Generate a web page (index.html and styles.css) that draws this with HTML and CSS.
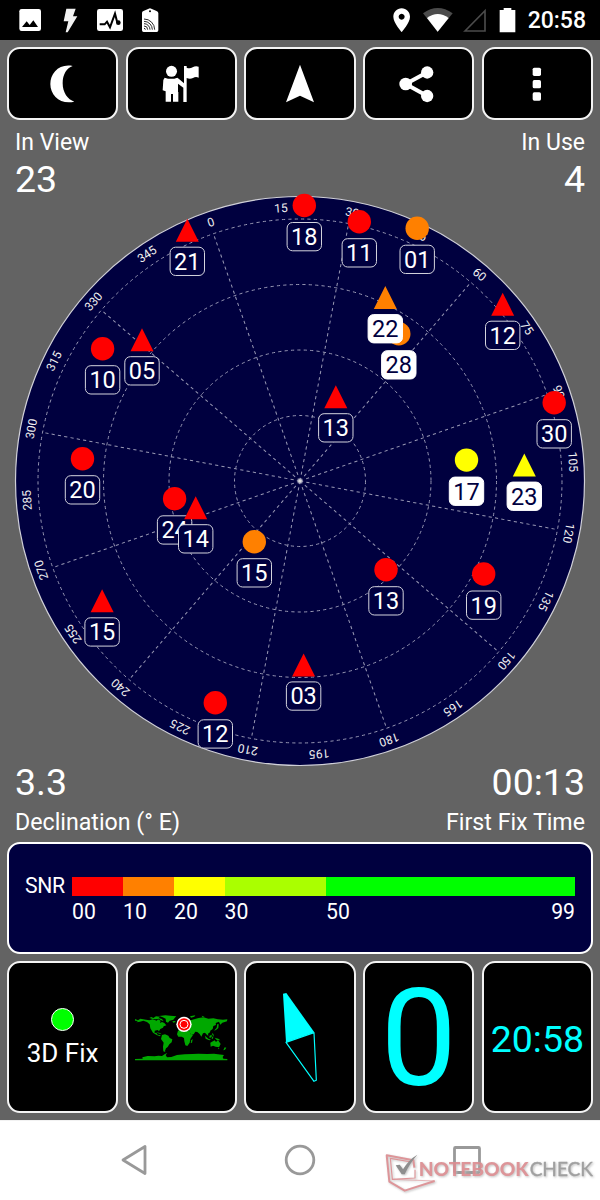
FILE: index.html
```html
<!DOCTYPE html>
<html lang="en">
<head>
  <meta charset="UTF-8" />
  <meta name="viewport" content="width=device-width, initial-scale=1" />
  <title>GPS Status</title>
  <link rel="stylesheet" href="styles.css">
</head>
<body>

  <div class="statusbar">
    <div class="status-left">
      <svg viewBox="30 0 120 120"><rect x="58" y="27" width="65" height="66" rx="7" fill="#fff"/><path d="M66 81 L80 64 L89 75 L100 61 L114 81Z" fill="#000"/></svg>
      <svg viewBox="150 0 120 120"><path d="M199 26 H227 L219 49 H232 L203 97 H197 L205 64 H191Z" fill="#f2f2f2"/></svg>
      <svg viewBox="270 0 120 120"><rect x="291" y="27" width="78" height="66" rx="7" fill="#fff"/><path d="M299 73 H314 L321 65 L330 82 L345 41 L352 68" fill="none" stroke="#000" stroke-width="6"/><circle cx="355" cy="68" r="7"/></svg>
      <svg viewBox="390 0 120 120"><path d="M426 38 Q426 34 432 32 L446 26 Q450 24 454 26 L468 32 Q475 34 475 39 V91 Q475 96 470 96 H431 Q426 96 426 91Z" fill="#fff"/><circle cx="450" cy="34" r="3"/><g fill="none" stroke="#000" stroke-width="2.500"><path d="M432 57 A32 32 0 0 1 464 89"/><path d="M432 64 A25 25 0 0 1 457 89"/><path d="M432 71 A18 18 0 0 1 450 89"/><path d="M432 78 A11 11 0 0 1 443 89"/><path d="M432 85 A4 4 0 0 1 436 89"/></g></svg>
    </div>
    <div class="status-right">
      <svg viewBox="251 0 108 120"><path fill-rule="evenodd" d="M304 25 C290 25 279 36 279 50 C279 68 304 96 304 96 C304 96 329 68 329 50 C329 36 318 25 304 25Z M304 41 A9 9 0 1 1 303.900 41Z" fill="#fff"/></svg>
      <svg viewBox="359 0 108 120"><path d="M368 40 Q412 8 457 40 L412 95Z" fill="#4b4b4b"/><path d="M380 54 Q412 30 445 54 L412 95Z" fill="#fff"/></svg>
      <svg viewBox="467 0 108 120"><path d="M494 93 L554 32 V93Z" fill="none" stroke="#4b4b4b" stroke-width="5"/></svg>
      <svg viewBox="575 0 108 120"><path d="M598 30 H610 V24 H633 V30 H645 V97 H598Z" fill="#fff"/></svg>
      <span class="clock">20:58</span>
    </div>
  </div>

  <div class="app">
    <div class="toolbar">
      <button class="tool"><svg viewBox="128 190 120 120"><path d="M217 196 C176 188 150 218 150 250 C150 285 181 313 222 303 C202 297 187 276 187 248 C187 221 199 202 217 196Z"/></svg></button>
      <button class="tool"><svg viewBox="484 190 120 120"><circle cx="515.500" cy="212" r="16.500"/><path d="M495 231 Q515 238 533 231 L539 236 L553 248 V196 H561 V201 Q570 205 579 200 Q587 195 597 198 V231 Q588 227 580 232 Q571 237 561 232 V304 H551 V261 L535 249 V274 H536 V303 H520 V280 H514 V303 H498 V272 L489 269 L491 238Z"/></svg></button>
      <button class="tool"><svg viewBox="840 190 120 120"><path d="M900 192 L942 305 L900 285 L858 305Z"/></svg></button>
      <button class="tool"><svg viewBox="296 190 120 120"><path d="M381 215 L316 250 L381 286" fill="none" stroke="#fff" stroke-width="12"/><circle cx="316" cy="250" r="19"/><circle cx="380.500" cy="215.500" r="18.500"/><circle cx="380.500" cy="286" r="18.500"/></svg></button>
      <button class="tool"><svg viewBox="652 190 120 120"><rect x="699" y="201" width="25" height="25" rx="5"/><rect x="699" y="238" width="25" height="25" rx="5"/><rect x="699" y="275" width="25" height="25" rx="5"/></svg></button>
    </div>

    <div class="stats stats-top">
      <div class="stat">
        <span class="stat-label">In View</span>
        <span class="stat-value">23</span>
      </div>
      <div class="stat right">
        <span class="stat-label">In Use</span>
        <span class="stat-value">4</span>
      </div>
    </div>

    <!-- Sky view -->
    <svg class="radar" viewBox="-285 -285 570 570">
      <defs>
        <circle id="dot" r="11.700"/>
        <path id="tri" d="M0 -11.500 L11.500 11.500 H-11.500Z"/>
        <rect id="tag" x="-17.200" y="17" width="34.400" height="28.300" rx="5.500"/>
      </defs>

      <circle class="sky" r="284.500"/>
      <g class="grid">
        <circle r="65.500"/>
        <circle r="131"/>
        <circle r="196.500"/>
        <circle r="262"/>
        <g transform="rotate(-19.300)">
          <path d="M0 0V-262"/>
          <path d="M0 0V-262" transform="rotate(30)"/>
          <path d="M0 0V-262" transform="rotate(60)"/>
          <path d="M0 0V-262" transform="rotate(90)"/>
          <path d="M0 0V-262" transform="rotate(120)"/>
          <path d="M0 0V-262" transform="rotate(150)"/>
          <path d="M0 0V-262" transform="rotate(180)"/>
          <path d="M0 0V-262" transform="rotate(210)"/>
          <path d="M0 0V-262" transform="rotate(240)"/>
          <path d="M0 0V-262" transform="rotate(270)"/>
          <path d="M0 0V-262" transform="rotate(300)"/>
          <path d="M0 0V-262" transform="rotate(330)"/>
        </g>
      </g>
      <circle r="1.800" fill="#ddd"/>

      <g class="degrees" transform="rotate(-19)">
        <text y="-269.500">0</text>
        <text y="-269.500" transform="rotate(15)">15</text>
        <text y="-269.500" transform="rotate(30)">30</text>
        <text y="-269.500" transform="rotate(45)">45</text>
        <text y="-269.500" transform="rotate(60)">60</text>
        <text y="-269.500" transform="rotate(75)">75</text>
        <text y="-269.500" transform="rotate(90)">90</text>
        <text y="-269.500" transform="rotate(105)">105</text>
        <text y="-269.500" transform="rotate(120)">120</text>
        <text y="-269.500" transform="rotate(135)">135</text>
        <text y="-269.500" transform="rotate(150)">150</text>
        <text y="-269.500" transform="rotate(165)">165</text>
        <text y="-269.500" transform="rotate(180)">180</text>
        <text y="-269.500" transform="rotate(195)">195</text>
        <text y="-269.500" transform="rotate(210)">210</text>
        <text y="-269.500" transform="rotate(225)">225</text>
        <text y="-269.500" transform="rotate(240)">240</text>
        <text y="-269.500" transform="rotate(255)">255</text>
        <text y="-269.500" transform="rotate(270)">270</text>
        <text y="-269.500" transform="rotate(285)">285</text>
        <text y="-269.500" transform="rotate(300)">300</text>
        <text y="-269.500" transform="rotate(315)">315</text>
        <text y="-269.500" transform="rotate(330)">330</text>
        <text y="-269.500" transform="rotate(345)">345</text>
      </g>

      <!-- Satellites: dot = GPS, triangle = GLONASS, white tag = in use -->
      <g class="sat red" transform="translate(4.300 -275.500)"><use href="#dot"/><use href="#tag" class="tag"/><text y="39.500">18</text></g>
      <g class="sat red" transform="translate(59.300 -259.300)"><use href="#dot"/><use href="#tag" class="tag"/><text y="39.500">11</text></g>
      <g class="sat orange" transform="translate(117.200 -252.800)"><use href="#dot"/><use href="#tag" class="tag"/><text y="39.500">01</text></g>
      <g class="sat red" transform="translate(-197.400 -132.300)"><use href="#dot"/><use href="#tag" class="tag"/><text y="39.500">10</text></g>
      <g class="sat red" transform="translate(-217.500 -22.300)"><use href="#dot"/><use href="#tag" class="tag"/><text y="39.500">20</text></g>
      <g class="sat red" transform="translate(254.200 -78.300)"><use href="#dot"/><use href="#tag" class="tag"/><text y="39.500">30</text></g>
      <g class="sat orange used" transform="translate(98.800 -147.300)"><use href="#dot"/><use href="#tag" class="tag"/><text y="39.500">28</text></g>
      <g class="sat yellow used" transform="translate(166.500 -20.900)"><use href="#dot"/><use href="#tag" class="tag"/><text y="39.500">17</text></g>
      <g class="sat red" transform="translate(-125.400 17.800)"><use href="#dot"/><use href="#tag" class="tag"/><text y="39.500">24</text></g>
      <g class="sat orange" transform="translate(-45.700 60.700)"><use href="#dot"/><use href="#tag" class="tag"/><text y="39.500">15</text></g>
      <g class="sat red" transform="translate(86 88.700)"><use href="#dot"/><use href="#tag" class="tag"/><text y="39.500">13</text></g>
      <g class="sat red" transform="translate(183.700 93)"><use href="#dot"/><use href="#tag" class="tag"/><text y="39.500">19</text></g>
      <g class="sat red" transform="translate(-84.700 221.800)"><use href="#dot"/><use href="#tag" class="tag"/><text y="39.500">12</text></g>
      <g class="sat red" transform="translate(-112.700 -250.800)"><use href="#tri"/><use href="#tag" class="tag"/><text y="39.500">21</text></g>
      <g class="sat red" transform="translate(-158 -141.300)"><use href="#tri"/><use href="#tag" class="tag"/><text y="39.500">05</text></g>
      <g class="sat orange used" transform="translate(85.300 -183.400)"><use href="#tri"/><use href="#tag" class="tag"/><text y="39.500">22</text></g>
      <g class="sat red" transform="translate(202.700 -176.800)"><use href="#tri"/><use href="#tag" class="tag"/><text y="39.500">12</text></g>
      <g class="sat red" transform="translate(35.800 -84.300)"><use href="#tri"/><use href="#tag" class="tag"/><text y="39.500">13</text></g>
      <g class="sat yellow used" transform="translate(224.300 -15.900)"><use href="#tri"/><use href="#tag" class="tag"/><text y="39.500">23</text></g>
      <g class="sat red" transform="translate(-104.300 26.700)"><use href="#tri"/><use href="#tag" class="tag"/><text y="39.500">14</text></g>
      <g class="sat red" transform="translate(-197.900 119.800)"><use href="#tri"/><use href="#tag" class="tag"/><text y="39.500">15</text></g>
      <g class="sat red" transform="translate(3.600 183.900)"><use href="#tri"/><use href="#tag" class="tag"/><text y="39.500">03</text></g>
    </svg>

    <div class="stats stats-bottom">
      <div class="stat">
        <span class="stat-value">3.3</span>
        <span class="stat-label">Declination (° E)</span>
      </div>
      <div class="stat right">
        <span class="stat-value">00:13</span>
        <span class="stat-label">First Fix Time</span>
      </div>
    </div>

    <div class="snr">
      <span class="snr-title">SNR</span>
      <div class="snr-scale">
        <div class="snr-step s0"><i></i><span>00</span></div>
        <div class="snr-step s10"><i></i><span>10</span></div>
        <div class="snr-step s20"><i></i><span>20</span></div>
        <div class="snr-step s30"><i></i><span>30</span></div>
        <div class="snr-step s50"><i></i><span>50</span><span>99</span></div>
      </div>
    </div>

    <div class="tiles">
      <div class="tile fix">
        <span class="led"></span>
        <span>3D Fix</span>
      </div>
      <div class="tile">
        <svg class="map" viewBox="-3 0 315 165">
          <g fill="#00a800">
            <path d="M15 27 L24 31 L31 26 L48 29 L58 31 L68 28 L80 32 L84 28 L92 32 L90 39 L96 36 L103 39 L109 46 L101 49 L99 53 L91 57 L87 64 L83 60 L74 62 L74 69 L79 68 L83 74 L92 76 L90 79 L80 75 L69 68 L61 55 L59 43 L51 36 L40 32 L30 35 L19 37 L24 33 L15 32Z"/>
            <path d="M58 24 L64 21 L70 24 L78 19 L90 20 L86 24 L96 27 L101 34 L92 30 L86 26 L77 28 L68 27Z"/>
            <path d="M88 18 L106 16 L121 17 L139 19 L134 24 L130 29 L119 32 L114 38 L108 35 L107 26 L98 22Z"/>
            <path d="M96 75 L105 73 L115 77 L119 84 L127 88 L125 97 L118 103 L113 111 L108 115 L105 122 L106 126 L100 124 L99 110 L101 98 L93 87Z"/>
            <path d="M144 62 L155 57 L168 61 L179 64 L182 73 L189 75 L181 87 L179 98 L172 108 L166 106 L163 94 L162 84 L155 80 L145 80 L141 73Z"/>
            <path d="M184 91 L188 87 L186 98 L182 99Z"/>
            <path d="M127 34 L135 33 L137 36 L130 38Z"/>
            <path d="M147 56 L150 49 L146 43 L153 39 L158 31 L171 27 L182 31 L195 27 L206 24 L221 22 L235 26 L250 25 L264 28 L279 29 L292 28 L291 34 L277 38 L271 44 L267 35 L257 39 L258 45 L250 48 L248 57 L241 62 L240 67 L234 71 L235 78 L229 73 L225 68 L219 70 L214 80 L209 72 L202 66 L196 65 L191 73 L183 75 L178 63 L173 57 L165 57 L158 51 L154 57Z"/>
            <path d="M262 42 L266 43 L265 54 L258 60 L252 62 L260 53Z"/>
            <path d="M180 19 L196 16 L193 20 L183 23Z M215 17 L224 20 L217 21Z"/>
            <path d="M225 77 L235 86 L243 89 L238 91 L227 86Z M238 78 L245 74 L245 81 L239 84Z M246 82 L250 78 L249 86 L245 86Z M246 69 L250 72 L252 79 L247 75Z M254 83 L265 86 L271 91 L260 90Z"/>
            <path d="M241 98 L250 93 L254 91 L258 96 L264 90 L272 102 L267 112 L257 110 L249 107 L242 110Z M264 114 L268 114 L266 118Z M284 112 L289 113 L285 119 L280 121Z M79 67 L90 69 L95 73 L84 70Z"/>
            <path d="M15 147 L38 146 L37 142 L53 138 L74 139 L85 137 L96 138 L105 132 L112 129 L107 135 L111 142 L124 141 L141 135 L164 133 L188 132 L205 131 L232 132 L252 131 L282 135 L278 141 L280 146 L292 147 V151 H15Z"/>
          </g>
          <circle cx="162" cy="43" r="23" fill="#fff"/>
          <circle cx="162" cy="43" r="18.500" fill="#f00"/>
          <circle cx="162" cy="43" r="12" fill="none" stroke="#fff" stroke-width="3"/>
        </svg>
      </div>
      <div class="tile">
        <svg class="compass" viewBox="90 96 180 300">
          <path d="M129 116 L139 114 L223 232 L138 262Z" fill="#0ff"/>
          <path d="M138 262 L222 233 L229 376 L222 379Z" fill="none" stroke="#0ff" stroke-width="3.500" stroke-linejoin="round"/>
        </svg>
      </div>
      <div class="tile speed">0</div>
      <div class="tile time">20:58</div>
    </div>
  </div>

  <div class="navbar">
    <svg viewBox="0 0 32 34"><path d="M28 3.500 V30.500 L6 17Z"/></svg>
    <svg viewBox="0 0 32 34"><circle cx="16" cy="17" r="13.800"/></svg>
    <svg viewBox="0 0 32 34"><rect x="3.500" y="4.500" width="25" height="25" rx="1"/></svg>
    <svg class="watermark" viewBox="855 95 630 125">
      <g fill="none" stroke="#db8d91" stroke-width="6" stroke-linejoin="round">
        <path d="M943 142 L940 120 L860 105 L868 184 L914 211 L1004 182"/>
        <path d="M945 148 V173 L877 177 L871 114 L934 125" stroke-width="3.500"/>
        <path d="M877 177 L1004 182" stroke-width="2"/>
      </g>
      <path d="M887 135 L899 133 L909 147 Q926 118 952 103 Q928 130 914 162 H905Z" fill="#858585"/>
      <text class="wm-red" x="956" y="166" textLength="330" lengthAdjust="spacingAndGlyphs">NOTEBOOK</text>
      <text class="wm-gray" x="1289" y="166" textLength="190" lengthAdjust="spacingAndGlyphs">CHECK</text>
    </svg>
  </div>

</body>
</html>
```
FILE: styles.css
```css
* {
  box-sizing: border-box;
}

body {
  margin: 0;
  width: 600px;
  height: 1200px;
  overflow: hidden;
  font-family: Roboto, sans-serif;
  background-color: #000;
  color: #fff;
}

svg {
  display: block;
}

.statusbar {
  height: 40px;
  background-color: #000;
  display: flex;
  justify-content: space-between;
  padding: 0 14px 0 10px;
}

.status-left,
.status-right {
  display: flex;
}

.status-left svg {
  width: 40px;
  height: 40px;
}

.status-right svg {
  width: 36px;
  height: 40px;
}

.clock {
  font-size: 23px;
  font-weight: 500;
  line-height: 42px;
}

.app {
  height: 1080px;
  background-color: #636363;
  display: flex;
  flex-direction: column;
  padding: 7px;
}

.toolbar,
.tiles {
  display: grid;
  grid-template-columns: repeat(5, 1fr);
  gap: 7.500px;
}

.toolbar {
  height: 73px;
}

.tool,
.tile {
  background-color: #000;
  border: 2px solid #f4f4f4;
  border-radius: 13px;
  padding: 0;
  display: flex;
  align-items: center;
  justify-content: center;
}

.tool svg {
  width: 40px;
  height: 40px;
  fill: #fff;
}

.stats {
  height: 76px;
  padding: 0 8px;
  display: flex;
  justify-content: space-between;
}

.stats-top {
  padding-top: 11px;
}

.stats-bottom {
  padding-top: 1px;
}

.stat {
  display: flex;
  flex-direction: column;
  gap: 9px;
}

.stats-bottom .stat {
  gap: 12px;
}

.stat.right {
  text-align: right;
}

.stat-label {
  font-size: 23px;
  line-height: 24px;
}

.stats-bottom .stat-label {
  font-size: 23.200px;
}

.stat-value {
  font-size: 37.500px;
  line-height: 31px;
}

/* Sky view */
.radar {
  width: 570px;
  height: 570px;
  margin: 0 8px;
  overflow: visible;
}

.radar text {
  text-anchor: middle;
}

.sky {
  fill: #00003f;
  stroke: #d0d0d8;
  stroke-width: 1.200;
}

.grid {
  fill: none;
  stroke: #9898b4;
  stroke-width: 1;
  stroke-dasharray: 3.200 3.200;
}

.degrees {
  fill: #f0f0f0;
  font-size: 12px;
}

.sat text {
  fill: #fff;
  font-size: 23.500px;
}

.sat .tag {
  fill: #00003f;
  stroke: #d4d4de;
  stroke-width: 1;
}

.sat.used .tag {
  fill: #fff;
  stroke: #fff;
}

.sat.used text {
  fill: #00003f;
}

.red {
  fill: #f00;
}

.orange {
  fill: #ff8000;
}

.yellow {
  fill: #ff0;
}

/* SNR */
.snr {
  height: 112px;
  background-color: #00003f;
  border: 2px solid #fff;
  border-radius: 13px;
  padding: 32.500px 16px 0 16px;
  display: flex;
  font-size: 21.200px;
}

.snr-title {
  width: 47px;
  line-height: 18px;
  letter-spacing: -0.3px;
}

.snr-scale {
  flex: 1;
  display: flex;
}

.snr-step {
  display: flex;
  flex-wrap: wrap;
  justify-content: space-between;
  align-content: flex-start;
}

.snr-step i {
  width: 100%;
  height: 19px;
}

.snr-step span {
  line-height: 32px;
}

.s0 {
  flex: 51;
}

.s0 i {
  background-color: #f00;
}

.s10 {
  flex: 51;
}

.s10 i {
  background-color: #ff8000;
}

.s20 {
  flex: 50.500;
}

.s20 i {
  background-color: #ff0;
}

.s30 {
  flex: 101.500;
}

.s30 i {
  background-color: #af0;
}

.s50 {
  flex: 249;
}

.s50 i {
  background-color: #0f0;
}

.tiles {
  height: 152px;
  margin-top: 7px;
}

.fix {
  flex-direction: column;
  gap: 6px;
  padding-top: 3px;
  font-size: 26px;
  line-height: 32px;
}

.led {
  width: 23px;
  height: 23px;
  border-radius: 50%;
  border: 1px solid #fff;
  background-color: #0f0;
}

.map {
  width: 105px;
  height: 55px;
}

.compass {
  width: 60px;
  height: 100px;
}

.speed {
  color: #0ff;
  font-size: 136px;
  line-height: 144px;
  padding-top: 4px;
}

.time {
  color: #0ff;
  font-size: 37.500px;
  padding-top: 3px;
}

/* Navigation */
.navbar {
  position: relative;
  height: 80px;
  background-color: #fff;
  border-top: 1px solid #f2f2f2;
  display: flex;
  align-items: center;
  justify-content: space-between;
  padding: 0 117px 2px;
}

.navbar > svg {
  width: 32px;
  height: 34px;
  fill: none;
  stroke: #999;
  stroke-width: 2.800;
  stroke-linejoin: round;
}

.navbar .watermark {
  position: absolute;
  left: 385px;
  top: 31px;
  width: 210px;
  height: 41.670px;
  stroke: none;
  opacity: 0.92;
  filter: drop-shadow(1px 1px 1px #bbb);
}

.watermark text {
  font-family: Lato, sans-serif;
  font-size: 55px;
}

.wm-red {
  fill: #db8d91;
  font-weight: 900;
}

.wm-gray {
  fill: #999;
  font-weight: 400;
  stroke: #999;
  stroke-width: 1;
}
```
